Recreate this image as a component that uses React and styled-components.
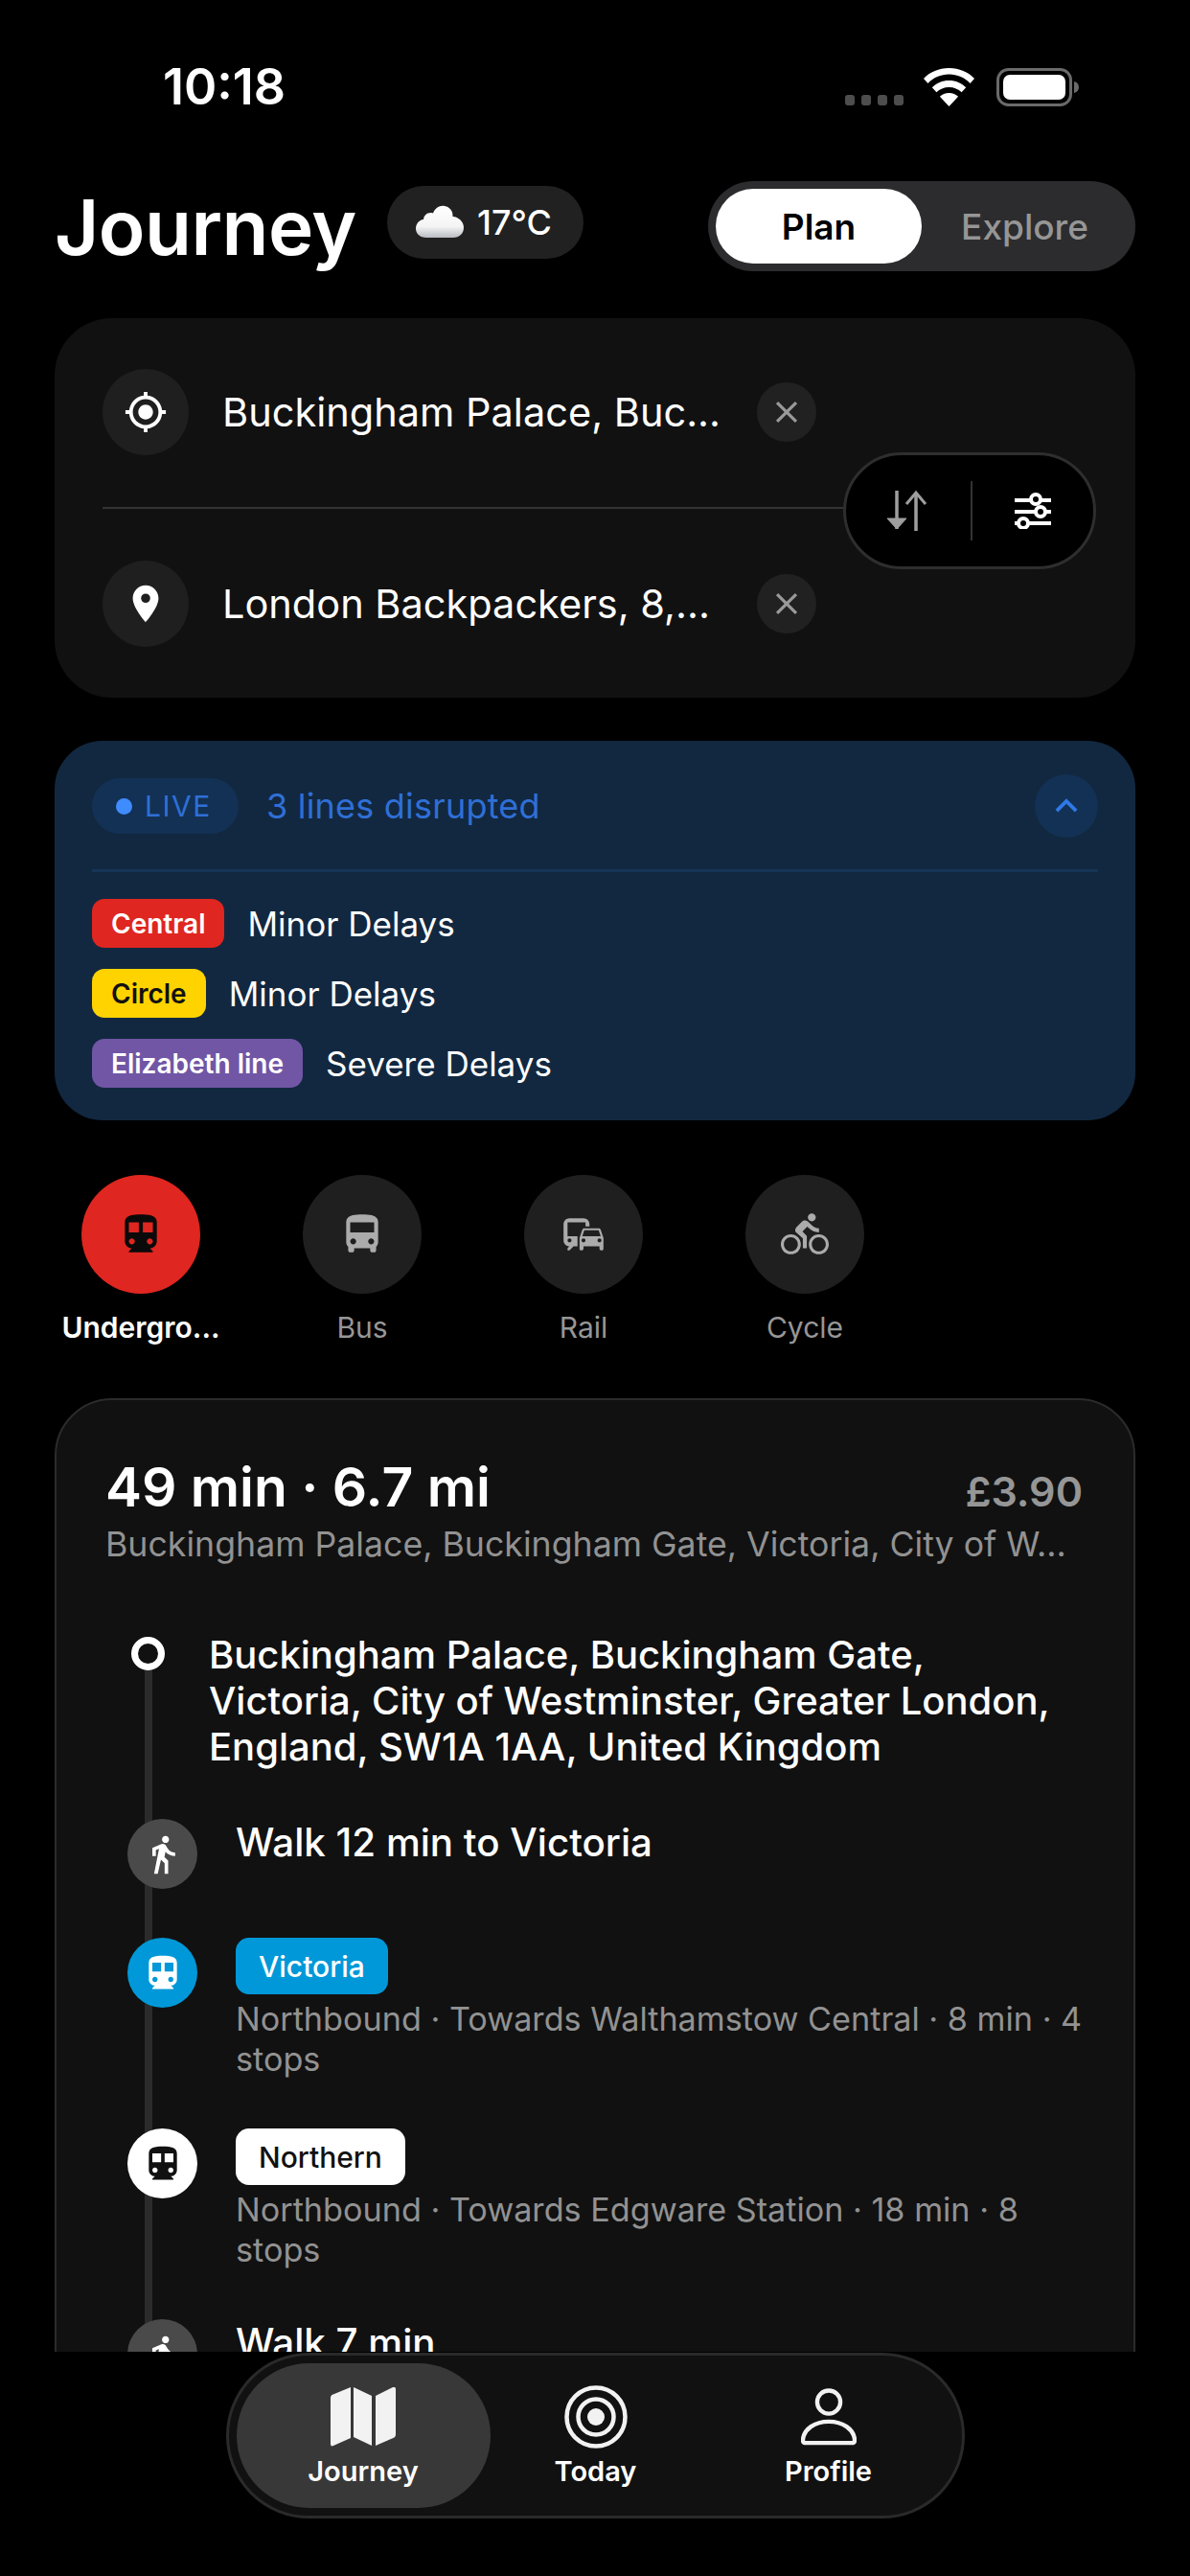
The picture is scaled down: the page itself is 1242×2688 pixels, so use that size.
import React from 'react';
import styled, { createGlobalStyle } from 'styled-components';
import {
    MdDirectionsSubway,
    MdDirectionsBus,
    MdCommute,
    MdDirectionsBike,
    MdDirectionsWalk,
    MdGpsFixed,
    MdLocationOn,
    MdClose,
    MdKeyboardArrowUp,
} from 'react-icons/md';

const GlobalStyle = createGlobalStyle`
    html, body {
        margin: 0;
        background: #000;
    }
    * {
        box-sizing: border-box;
    }
`;

const Page = styled.div`
    width: 1242px;
    height: 2688px;
    display: flex;
    flex-direction: column;
    overflow: hidden;
    background: #000;
    color: #fff;
    font-family: Inter, 'Liberation Sans', sans-serif;
`;

const Scroll = styled.div`
    height: 2454px;
    overflow: hidden;
    flex-shrink: 0;
`;

const StatusBar = styled.div`
    height: 189px;
    display: flex;
    justify-content: space-between;
    padding: 61px 115px 0 170px;
`;

const Time = styled.div`
    font-size: 52px;
    line-height: 60px;
    font-weight: 600;
`;

const StatusIcons = styled.div`
    display: flex;
    align-items: flex-start;
    padding-top: 10px;
`;

const SignalDots = styled.div`
    display: flex;
    gap: 7px;
    margin: 28px 20px 0 0;
`;

const SignalDot = styled.span`
    width: 10px;
    height: 11px;
    border-radius: 3px;
    background: #4d4d4d;
`;

const HeaderRow = styled.div`
    display: flex;
    align-items: center;
    height: 94px;
    padding: 0 57px;
`;

const Title = styled.h1`
    margin: 0;
    font-size: 80px;
    font-weight: 600;
    letter-spacing: -0.5px;
`;

const WeatherPill = styled.div`
    display: flex;
    align-items: center;
    gap: 14px;
    width: 205px;
    height: 76px;
    margin: -8px 0 0 32px;
    padding-left: 30px;
    border-radius: 38px;
    background: #212121;
    font-size: 36px;
    font-weight: 500;
`;

const Segment = styled.div`
    display: flex;
    align-items: center;
    width: 446px;
    height: 94px;
    margin-left: auto;
    padding: 0 8px;
    border-radius: 47px;
    background: #2c2c2e;
`;

const SegmentItem = styled.div`
    display: flex;
    align-items: center;
    justify-content: center;
    flex: ${props => (props.$active ? '0 0 215px' : '1')};
    height: 78px;
    border-radius: 39px;
    font-size: 37px;
    font-weight: ${props => (props.$active ? 600 : 500)};
    background: ${props => (props.$active ? '#fff' : 'transparent')};
    color: ${props => (props.$active ? '#000' : '#969696')};
`;

const RouteCard = styled.section`
    position: relative;
    display: flex;
    flex-direction: column;
    gap: 54px;
    height: 396px;
    margin: 49px 57px 0;
    padding: 53px 50px;
    border-radius: 60px;
    background: #111;
`;

const RouteRow = styled.div`
    display: flex;
    align-items: center;
    width: 745px;
    height: 90px;
`;

const RouteIcon = styled.div`
    display: flex;
    align-items: center;
    justify-content: center;
    flex: 0 0 90px;
    height: 90px;
    border-radius: 50%;
    background: #1f1f1f;
    color: #fff;
    font-size: 46px;
`;

const RouteText = styled.div`
    flex: 1;
    padding-left: 35px;
    font-size: 41.5px;
    white-space: nowrap;
`;

const ClearButton = styled.div`
    display: flex;
    align-items: center;
    justify-content: center;
    flex: 0 0 62px;
    height: 62px;
    border-radius: 50%;
    background: #212121;
    color: #9a9a9a;
    font-size: 38px;
`;

const RouteDivider = styled.div`
    width: 800px;
    height: 2px;
    background: #333;
`;

const ActionPill = styled.div`
    position: absolute;
    top: 140px;
    right: 41px;
    display: flex;
    align-items: center;
    justify-content: space-between;
    width: 264px;
    height: 122px;
    padding: 0 44px 0 40px;
    border-radius: 61px;
    border: 3px solid #2e2e2e;
    background: #000;
`;

const ActionDivider = styled.div`
    width: 2px;
    height: 62px;
    background: #333;
`;

const LiveCard = styled.section`
    height: 396px;
    margin: 45px 57px 0;
    padding: 35px 39px;
    border-radius: 50px;
    background: #122840;
`;

const LiveHeader = styled.div`
    display: flex;
    align-items: center;
    height: 66px;
`;

const LivePill = styled.div`
    display: flex;
    align-items: center;
    gap: 13px;
    width: 153px;
    height: 58px;
    padding-left: 25px;
    border-radius: 29px;
    background: #123154;
    color: #2f6fd6;
    font-size: 30px;
    letter-spacing: 1.5px;
`;

const LiveDot = styled.span`
    width: 17px;
    height: 17px;
    border-radius: 50%;
    background: #3f8cff;
`;

const LiveText = styled.div`
    margin-left: 29px;
    color: #2f6fd6;
    font-size: 36px;
    letter-spacing: 0.2px;
`;

const ChevronButton = styled.div`
    display: flex;
    align-items: center;
    justify-content: center;
    width: 66px;
    height: 66px;
    margin-left: auto;
    border-radius: 50%;
    background: #123154;
    color: #2f78e6;
    font-size: 46px;
`;

const LiveDivider = styled.div`
    height: 3px;
    margin: 33px 0 28px;
    background: #163556;
`;

const StatusList = styled.div`
    display: flex;
    flex-direction: column;
    gap: 22px;
`;

const StatusRow = styled.div`
    display: flex;
    align-items: center;
    gap: 24px;
    height: 51px;
    font-size: 35px;
`;

const LineTag = styled.span`
    display: flex;
    align-items: center;
    height: 51px;
    padding: 0 20px;
    border-radius: 13px;
    background: ${props => props.$bg};
    color: ${props => props.$fg};
    font-size: 28px;
    font-weight: 600;
`;

const ModeRow = styled.div`
    display: flex;
    gap: 51px;
    margin-top: 57px;
    padding-left: 57px;
`;

const Mode = styled.div`
    display: flex;
    flex-direction: column;
    align-items: center;
    width: 180px;
    color: ${props => (props.$active ? '#fff' : '#969696')};
    font-size: 30px;
    line-height: 36px;
    font-weight: ${props => (props.$active ? 600 : 400)};
`;

const ModeCircle = styled.div`
    display: flex;
    align-items: center;
    justify-content: center;
    width: 124px;
    height: 124px;
    margin-bottom: 17px;
    border-radius: 50%;
    background: ${props => (props.$active ? '#df2620' : '#1f1f1f')};
    color: ${props => (props.$active ? '#0a0a0a' : '#ababab')};
    font-size: 50px;
`;

const JourneyCard = styled.section`
    margin: 56px 57px 0;
    padding: 56px 51px 0;
    min-height: 1100px;
    border: 2px solid #2b2b2b;
    border-radius: 60px 60px 0 0;
    background: #111;
`;

const Summary = styled.div`
    display: flex;
    justify-content: space-between;
    align-items: flex-end;
`;

const SummaryTitle = styled.div`
    font-size: 57px;
    line-height: 70px;
    font-weight: 600;
`;

const Fare = styled.div`
    padding: 0 2px 3px 0;
    font-size: 43px;
    line-height: 56px;
    font-weight: 600;
    color: #969696;
`;

const SummarySub = styled.div`
    margin-top: 2px;
    font-size: 35.7px;
    line-height: 44px;
    color: #929292;
    white-space: nowrap;
`;

const Timeline = styled.div`
    position: relative;
    display: flex;
    flex-direction: column;
    gap: 51px;
    margin-top: 70px;
    padding-left: 23px;
    &::before {
        content: '';
        position: absolute;
        left: 41px;
        top: 20px;
        bottom: 0;
        width: 8px;
        background: #2b2b2b;
    }
`;

const StartRow = styled.div`
    position: relative;
    display: flex;
    align-items: flex-start;
    gap: 46px;
    padding-left: 4px;
`;

const StartDot = styled.span`
    flex: 0 0 35px;
    height: 35px;
    margin-top: 5px;
    border-radius: 50%;
    border: 7px solid #fff;
    background: #111;
`;

const StartText = styled.div`
    width: 890px;
    font-size: 40px;
    line-height: 48px;
    font-weight: 500;
`;

const Step = styled.div`
    position: relative;
    display: flex;
    align-items: flex-start;
    gap: 40px;
`;

const StepIcon = styled.div`
    display: flex;
    align-items: center;
    justify-content: center;
    flex: 0 0 73px;
    height: 73px;
    border-radius: 50%;
    background: ${props => props.$bg};
    color: ${props => props.$fg};
    font-size: 44px;
`;

const StepBody = styled.div`
    width: 884px;
`;

const WalkText = styled.div`
    font-size: 40.3px;
    line-height: 50px;
    font-weight: 500;
`;

const RouteTag = styled.span`
    display: inline-flex;
    align-items: center;
    height: 59px;
    padding: 0 24px;
    border-radius: 14px;
    background: ${props => props.$bg};
    color: ${props => props.$fg};
    font-size: 30px;
    font-weight: 500;
`;

const StepDetail = styled.div`
    margin-top: 5px;
    font-size: 34.2px;
    line-height: 42px;
    color: #929292;
`;

const TabDock = styled.div`
    display: flex;
    justify-content: center;
    padding-top: 1px;
`;

const TabBar = styled.nav`
    display: flex;
    align-items: center;
    width: 771px;
    height: 173px;
    padding-left: 8px;
    border: 3px solid #2a2a2a;
    border-radius: 87px;
    background: #111;
`;

const Tab = styled.div`
    display: flex;
    flex-direction: column;
    align-items: center;
    width: ${props => props.$width}px;
    height: 151px;
    padding-top: 23px;
    border-radius: 76px;
    background: ${props => (props.$active ? '#383838' : 'transparent')};
    font-size: 29px;
    line-height: 36px;
    font-weight: 600;
`;

const TabGlyph = styled.div`
    display: flex;
    align-items: center;
    justify-content: center;
    height: 66px;
    margin-bottom: 6px;
`;

const WifiIcon = () => (
    <svg width="55" height="40" viewBox="0 0 55 40" fill="#fff">
        <path d="M27.5 0C17 0 7.5 4 1 11l4.5 5C11 10 19 6.6 27.5 6.6S44 10 49.5 16l4.5-5C47.5 4 38 0 27.5 0z" />
        <path d="M27.5 13c-7 0-13.200 2.700-17.700 7.300l4.600 5C17.800 22 22.400 20 27.500 20s9.700 2 13.100 5.300l4.600-5C40.700 15.700 34.500 13 27.500 13z" />
        <path d="M27.500 26c-3.800 0-7.200 1.400-9.600 3.800L27.500 40l9.600-10.200c-2.400-2.400-5.800-3.800-9.600-3.800z" />
    </svg>
);

const BatteryIcon = () => (
    <svg width="87" height="40" viewBox="0 0 87 40" style={{ marginLeft: 22 }}>
        <rect x="1.500" y="1.500" width="76" height="37" rx="11" fill="none" stroke="#6a6a6a" strokeWidth="3" />
        <rect x="7" y="7" width="65" height="26" rx="7" fill="#fff" />
        <path d="M81 14c3 .6 5 3 5 6s-2 5.400-5 6z" fill="#6a6a6a" />
    </svg>
);

const CloudIcon = () => (
    <svg width="50" height="36" viewBox="0 0 50 36">
        <defs>
            <linearGradient id="cloudFill" x1="0" y1="0" x2="0" y2="1">
                <stop offset="0" stopColor="#fff" />
                <stop offset="0.65" stopColor="#f4f4f4" />
                <stop offset="1" stopColor="#b9bcc2" />
            </linearGradient>
        </defs>
        <path
            d="M11 34C4.500 34 0 30 0 24.500 0 19.500 3.500 15.600 8 15 8.500 10 13 7 18 8.500 20 3 25 0 30 1c5.500 1 9 5.500 8.500 11 6 .5 11.500 5 11.500 11.500 0 6-4.500 10.500-11 10.500z"
            fill="url(#cloudFill)"
        />
    </svg>
);

const SwapIcon = () => (
    <svg width="46" height="46" viewBox="0 0 46 46" fill="none" stroke="#9e9e9e" strokeWidth="3.500">
        <path d="M13 2v40" />
        <path d="M3 31l10 11 10-11z" fill="#9e9e9e" strokeWidth="1" />
        <path d="M33 44V5" />
        <path d="M23 16L33 4l10 12" strokeWidth="3" />
    </svg>
);

const SlidersIcon = () => (
    <svg width="38" height="38" viewBox="0 0 38 38" fill="none" stroke="#fff" strokeWidth="4">
        <path d="M0 8h38M0 20h38M0 32h38" />
        <circle cx="22" cy="7" r="5" fill="#000" />
        <circle cx="27" cy="20" r="5" fill="#000" />
        <circle cx="9" cy="32" r="5" fill="#000" />
    </svg>
);

const MapIcon = () => (
    <svg width="68" height="62" viewBox="0 0 68 62" fill="#f2f2f2">
        <path d="M21 0v53L3 61c-2 1-3 0-3-2V11c0-1 .4-2 1.500-3z" />
        <path d="M24 0l19 9v52L24 52z" />
        <path d="M47 9L65 0c2-.5 3 .5 3 2v47c0 1.500-.4 2.500-1.500 3.400L47 61z" />
    </svg>
);

const TargetIcon = () => (
    <svg width="66" height="66" viewBox="0 0 66 66" fill="none" stroke="#f2f2f2" strokeWidth="4.500">
        <circle cx="33" cy="33" r="30.500" />
        <circle cx="33" cy="33" r="18.500" />
        <circle cx="33" cy="33" r="9" fill="#f2f2f2" stroke="none" />
    </svg>
);

const PersonIcon = () => (
    <svg width="58" height="62" viewBox="0 0 60 62" fill="none" stroke="#f2f2f2" strokeWidth="4.500">
        <circle cx="30" cy="15" r="12.500" />
        <path d="M5 59c-2 0-3-1-3-3C3 44 15 36 30 36s27 8 28 20c0 2-1 3-3 3z" />
    </svg>
);

const LINE_STATUS = [
    { name: 'Central', bg: '#df2620', fg: '#fff', status: 'Minor Delays' },
    { name: 'Circle', bg: '#ffd300', fg: '#111', status: 'Minor Delays' },
    { name: 'Elizabeth line', bg: '#7156a5', fg: '#fff', status: 'Severe Delays' },
];

const MODES = [
    { label: 'Undergro...', Icon: MdDirectionsSubway, active: true },
    { label: 'Bus', Icon: MdDirectionsBus },
    { label: 'Rail', Icon: MdCommute },
    { label: 'Cycle', Icon: MdDirectionsBike },
];

const App = () => (
    <Page>
        <GlobalStyle />
        <Scroll>
            <StatusBar>
                <Time>10:18</Time>
                <StatusIcons>
                    <SignalDots>
                        <SignalDot />
                        <SignalDot />
                        <SignalDot />
                        <SignalDot />
                    </SignalDots>
                    <WifiIcon />
                    <BatteryIcon />
                </StatusIcons>
            </StatusBar>

            <HeaderRow>
                <Title>Journey</Title>
                <WeatherPill>
                    <CloudIcon />
                    17°C
                </WeatherPill>
                <Segment>
                    <SegmentItem $active>Plan</SegmentItem>
                    <SegmentItem>Explore</SegmentItem>
                </Segment>
            </HeaderRow>

            <RouteCard>
                <RouteRow>
                    <RouteIcon>
                        <MdGpsFixed />
                    </RouteIcon>
                    <RouteText>Buckingham Palace, Buc...</RouteText>
                    <ClearButton>
                        <MdClose />
                    </ClearButton>
                </RouteRow>
                <RouteDivider />
                <RouteRow>
                    <RouteIcon>
                        <MdLocationOn />
                    </RouteIcon>
                    <RouteText>London Backpackers, 8,...</RouteText>
                    <ClearButton>
                        <MdClose />
                    </ClearButton>
                </RouteRow>
                <ActionPill>
                    <SwapIcon />
                    <ActionDivider />
                    <SlidersIcon />
                </ActionPill>
            </RouteCard>

            <LiveCard>
                <LiveHeader>
                    <LivePill>
                        <LiveDot />
                        LIVE
                    </LivePill>
                    <LiveText>3 lines disrupted</LiveText>
                    <ChevronButton>
                        <MdKeyboardArrowUp />
                    </ChevronButton>
                </LiveHeader>
                <LiveDivider />
                <StatusList>
                    {LINE_STATUS.map(line => (
                        <StatusRow key={line.name}>
                            <LineTag $bg={line.bg} $fg={line.fg}>
                                {line.name}
                            </LineTag>
                            {line.status}
                        </StatusRow>
                    ))}
                </StatusList>
            </LiveCard>

            <ModeRow>
                {MODES.map(({ label, Icon, active }) => (
                    <Mode key={label} $active={active}>
                        <ModeCircle $active={active}>
                            <Icon />
                        </ModeCircle>
                        {label}
                    </Mode>
                ))}
            </ModeRow>

            <JourneyCard>
                <Summary>
                    <SummaryTitle>49 min · 6.7 mi</SummaryTitle>
                    <Fare>£3.90</Fare>
                </Summary>
                <SummarySub>Buckingham Palace, Buckingham Gate, Victoria, City of W...</SummarySub>
                <Timeline>
                    <StartRow>
                        <StartDot />
                        <StartText>
                            Buckingham Palace, Buckingham Gate, Victoria, City of Westminster, Greater London,
                            England, SW1A 1AA, United Kingdom
                        </StartText>
                    </StartRow>
                    <Step>
                        <StepIcon $bg="#4a4a4a" $fg="#fff">
                            <MdDirectionsWalk />
                        </StepIcon>
                        <StepBody>
                            <WalkText>Walk 12 min to Victoria</WalkText>
                        </StepBody>
                    </Step>
                    <Step>
                        <StepIcon $bg="#0098d8" $fg="#fff">
                            <MdDirectionsSubway />
                        </StepIcon>
                        <StepBody>
                            <RouteTag $bg="#0098d8" $fg="#fff">
                                Victoria
                            </RouteTag>
                            <StepDetail>Northbound · Towards Walthamstow Central · 8 min · 4 stops</StepDetail>
                        </StepBody>
                    </Step>
                    <Step>
                        <StepIcon $bg="#fff" $fg="#111">
                            <MdDirectionsSubway />
                        </StepIcon>
                        <StepBody>
                            <RouteTag $bg="#fff" $fg="#111">
                                Northern
                            </RouteTag>
                            <StepDetail>Northbound · Towards Edgware Station · 18 min · 8 stops</StepDetail>
                        </StepBody>
                    </Step>
                    <Step>
                        <StepIcon $bg="#4a4a4a" $fg="#fff">
                            <MdDirectionsWalk />
                        </StepIcon>
                        <StepBody>
                            <WalkText>Walk 7 min</WalkText>
                        </StepBody>
                    </Step>
                </Timeline>
            </JourneyCard>
        </Scroll>

        <TabDock>
            <TabBar>
                <Tab $active $width={265}>
                    <TabGlyph>
                        <MapIcon />
                    </TabGlyph>
                    Journey
                </Tab>
                <Tab $width={220}>
                    <TabGlyph>
                        <TargetIcon />
                    </TabGlyph>
                    Today
                </Tab>
                <Tab $width={266}>
                    <TabGlyph>
                        <PersonIcon />
                    </TabGlyph>
                    Profile
                </Tab>
            </TabBar>
        </TabDock>
    </Page>
);

export default App;
